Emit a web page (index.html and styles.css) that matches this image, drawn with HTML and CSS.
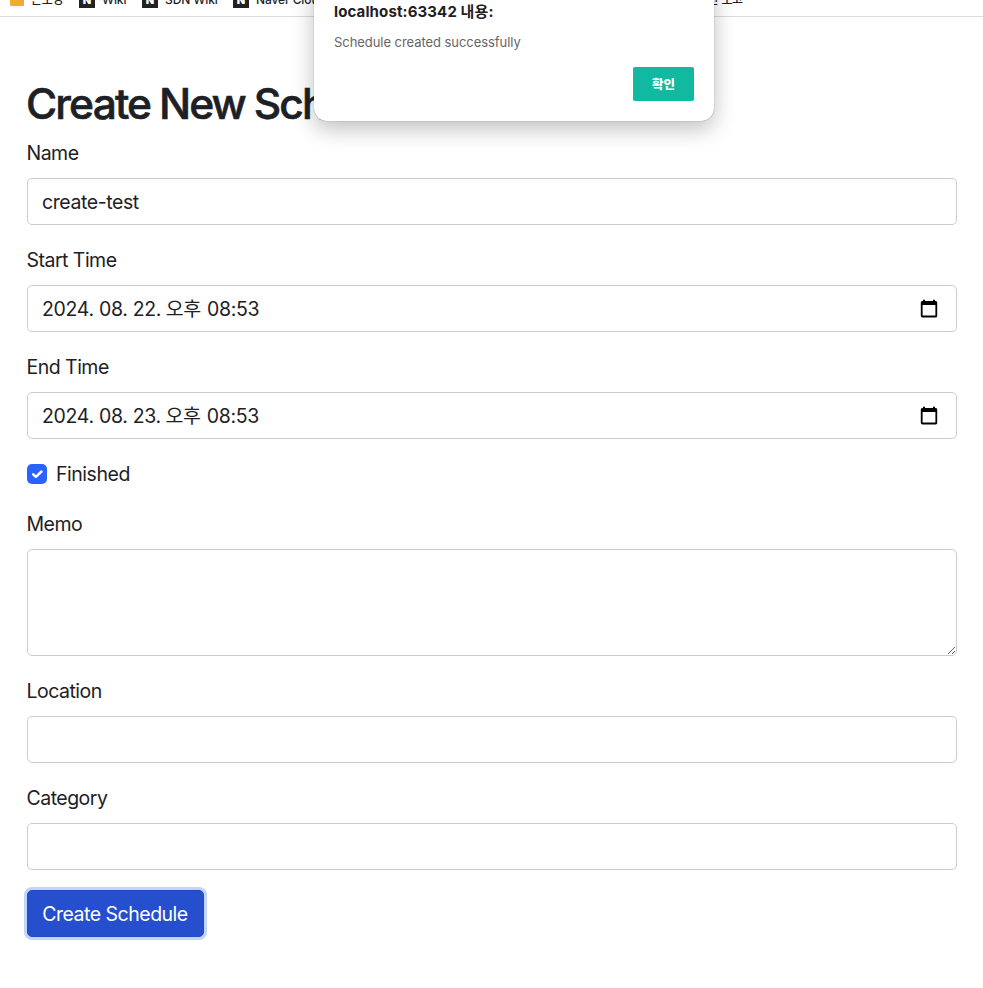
FILE: index.html
```
<!DOCTYPE html>
<html lang="ko">
<head>
<meta charset="utf-8">
<title>Create New Schedule</title>
<link rel="stylesheet" href="styles.css">
</head>
<body>
<header class="bookmarks">
  <span class="bookmark b-folder"><i class="folder"></i><span class="ko-mark">온보딩</span></span>
  <span class="bookmark b-wiki"><i class="favicon">N</i><span>Wiki</span></span>
  <span class="bookmark b-sdn"><i class="favicon">N</i><span>SDN Wiki</span></span>
  <span class="bookmark b-cloud"><i class="favicon">N</i><span>Naver Cloud</span></span>
  <span class="bookmark b-report"><span class="ko-mark">주간 보고</span></span>
</header>
<main class="page">
  <h1 class="title"><span>Create New Schedule</span></h1>
  <form>
    <label class="label l-name" for="name">Name</label>
    <input class="control" id="name" value="create-test">
    <label class="label l-start">Start Time</label>
    <div class="control date"><span>2024. 08. 22. <span class="meridiem">오후</span> 08:53</span>
      <svg class="calendar" viewBox="0 0 18 19"><path d="M2.5 3h13a.8.8 0 0 1 .8.8v12.9a.8.8 0 0 1-.8.8h-13a.8.8 0 0 1-.8-.8V3.800a.8.8 0 0 1 .8-.8Z" fill="none" stroke="#000" stroke-width="1.8"/><path d="M3 .8h2v2H3zM13 .8h2v2h-2zM1.500 2.500h15v3.500h-15z"/></svg>
    </div>
    <label class="label l-end">End Time</label>
    <div class="control date"><span>2024. 08. 23. <span class="meridiem">오후</span> 08:53</span>
      <svg class="calendar" viewBox="0 0 18 19"><path d="M2.5 3h13a.8.8 0 0 1 .8.8v12.9a.8.8 0 0 1-.8.8h-13a.8.8 0 0 1-.8-.8V3.800a.8.8 0 0 1 .8-.8Z" fill="none" stroke="#000" stroke-width="1.8"/><path d="M3 .8h2v2H3zM13 .8h2v2h-2zM1.500 2.500h15v3.500h-15z"/></svg>
    </div>
    <div class="check">
      <svg class="box" viewBox="0 0 20 20"><rect width="20" height="20" rx="5" fill="#2962ff"/><path d="m6.200 10.300 2.700 2.500 5.600-5.300" fill="none" stroke="#fff" stroke-width="2.5" stroke-linecap="round" stroke-linejoin="round"/></svg>
      <span>Finished</span>
    </div>
    <label class="label l-memo" for="memo">Memo</label>
    <textarea class="control memo" id="memo"></textarea>
    <label class="label l-location" for="location">Location</label>
    <input class="control" id="location">
    <label class="label l-category" for="category">Category</label>
    <input class="control" id="category">
    <button class="submit" type="button">Create Schedule</button>
  </form>
</main>
<section class="dialog" role="alertdialog">
  <h2 class="origin">localhost:63342 내용:</h2>
  <p class="message">Schedule created successfully</p>
  <button class="confirm" type="button">확인</button>
</section>
</body>
</html>
```
FILE: styles.css
```
* { box-sizing: border-box; }
body {
  margin: 0;
  height: 988px;
  overflow: hidden;
  background: #fff;
  color: #1d2125;
  font: 400 19.5px/30px Inter, "Noto Sans CJK KR", sans-serif;
}
.bookmarks {
  display: flex;
  height: 17px;
  padding-left: 10px;
  border-bottom: 1px solid #dcdcdc;
  overflow: hidden;
  color: #1f1f1f;
  font-size: 12px;
  font-weight: 450;
  line-height: 16px;
  letter-spacing: -0.1px;
  white-space: nowrap;
}
.bookmark { display: flex; flex: none; gap: 7px; margin-top: -8px; }
.b-folder { width: 69px; }
.b-wiki { width: 63px; }
.b-sdn { width: 91px; }
.b-cloud { width: 464px; }
.b-report { width: 60px; }
.ko-mark { letter-spacing: -0.3px; }
.folder { width: 14px; height: 14px; border-radius: 1px; background: #efac32; }
.favicon {
  width: 16px;
  height: 16px;
  background: #222;
  color: #fff;
  font: 900 11px/16px Inter, sans-serif;
  text-align: center;
}
.page { padding: 61px 26px 0 27px; }
.title {
  height: 50px;
  margin: 0 0 10px -1px;
  font-size: 42.5px;
  font-weight: 500;
  line-height: 51px;
  letter-spacing: -1.85px;
  word-spacing: -0.8px;
  -webkit-text-stroke: 0.6px #1d2125;
  white-space: nowrap;
}
.label { display: block; width: max-content; height: 30px; margin: 0 0 10px -0.5px; letter-spacing: -0.52px; }
.control {
  display: block;
  width: 100%;
  height: 47px;
  margin: 0 0 20px;
  padding: 0 14px;
  border: 1px solid #c9ccd3;
  border-radius: 5px;
  background: #fff;
  color: #1d2125;
  font: inherit;
  letter-spacing: -0.42px;
}
.date { display: flex; align-items: center; justify-content: space-between; padding-right: 18px; letter-spacing: -0.32px; }
.meridiem { margin: 0 1px 0 -0.5px; letter-spacing: -0.4px; }
.calendar { width: 18px; height: 19px; }
.check { display: flex; align-items: center; gap: 9px; height: 30px; margin-bottom: 20px; letter-spacing: -0.47px; }
.box { width: 20px; height: 20px; }
.memo { height: 107px; resize: vertical; }
.submit {
  display: block;
  width: 177px;
  height: 47px;
  padding: 0 1px 0 0;
  border: 1px solid #224ac4;
  border-radius: 5px;
  background: #254fcc;
  box-shadow: 0 0 0 3px #c0d4fc;
  color: #fff;
  font: inherit;
  letter-spacing: -0.5px;
}
.dialog {
  position: absolute;
  top: -20px;
  left: 314px;
  display: flex;
  flex-direction: column;
  width: 400px;
  height: 141px;
  padding: 22px 20px 20px;
  border-radius: 0 0 13px 13px;
  background: #fff;
  box-shadow: 0 0 1px rgba(0, 0, 0, .55), 0 8px 22px rgba(0, 0, 0, .25);
}
.origin { width: max-content; margin: 0; color: #1f2022; font-size: 15px; font-weight: 700; line-height: 20px; letter-spacing: 0.12px; }
.message { width: max-content; margin: 10px 0 14px; color: #666; font-size: 13px; line-height: 21px; letter-spacing: -0.06px; }
.confirm {
  align-self: flex-end;
  width: 61px;
  height: 34px;
  padding: 1px 0 0;
  border: 0;
  border-radius: 2px;
  background: #10b99f;
  color: #fff;
  font: 900 12.500px/33px Inter, "Noto Sans CJK KR", sans-serif;
}
```
